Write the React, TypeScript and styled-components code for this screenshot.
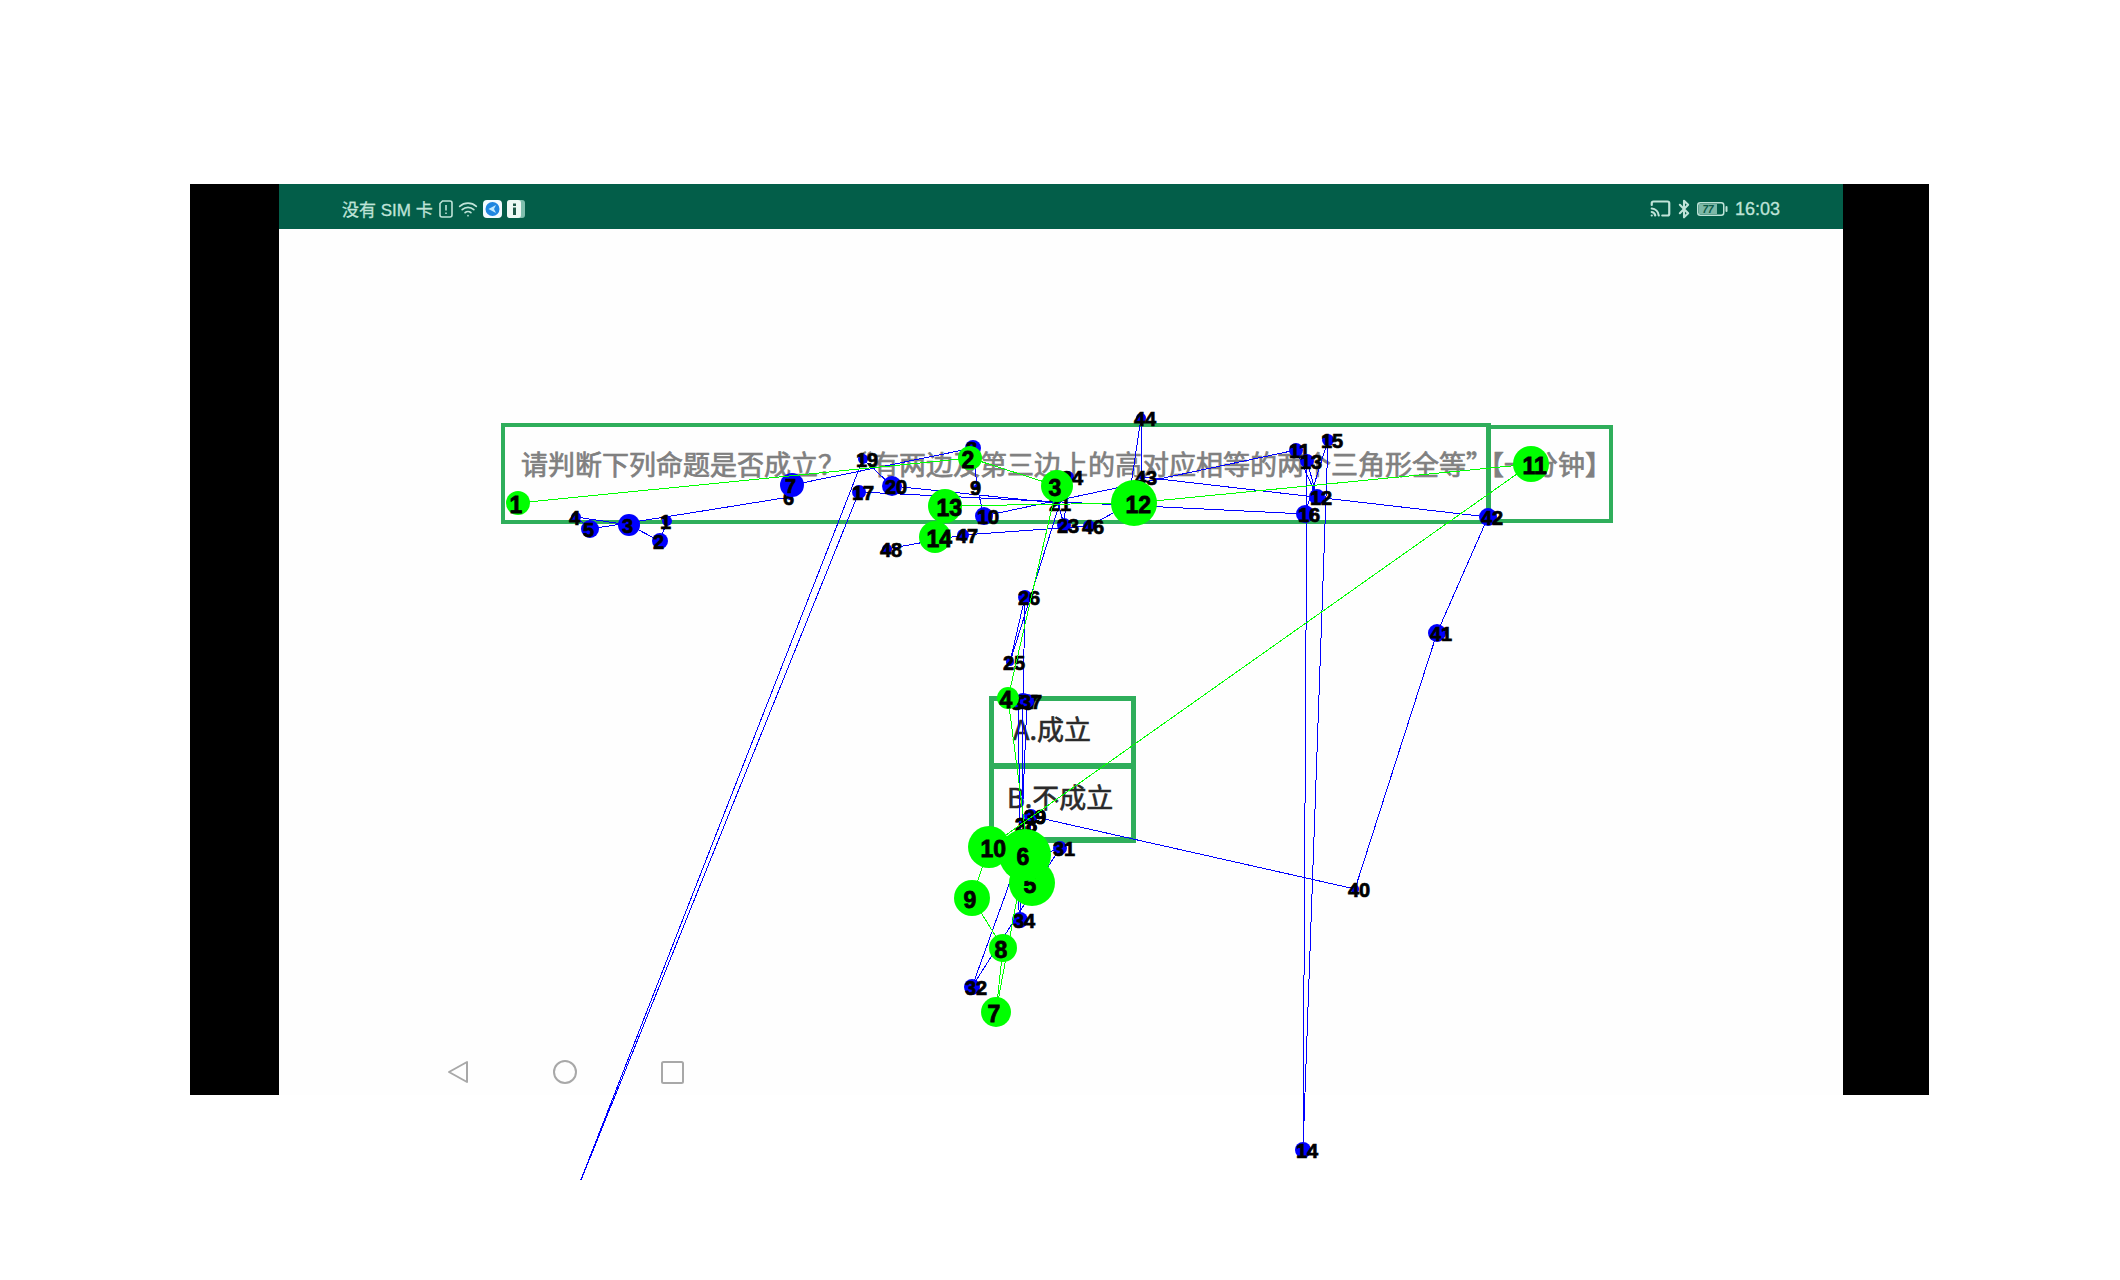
import styled, { createGlobalStyle } from "styled-components";
import { Bluetooth, Cast, Wifi } from "lucide-react";

const GlobalStyle = createGlobalStyle`
  html, body {
    margin: 0;
    background: #ffffff;
  }
`;

type Point = { n: number; x: number; y: number; r: number };

const CANVAS_HEIGHT = 1180;

// scanpath of the first recording (blue)
const bluePoints: Point[] = [
  { n: 1, x: 667, y: 521, r: 5 },
  { n: 2, x: 660, y: 541, r: 8 },
  { n: 3, x: 629, y: 525, r: 11 },
  { n: 4, x: 576, y: 517, r: 5 },
  { n: 5, x: 590, y: 529, r: 9 },
  { n: 6, x: 790, y: 497, r: 3 },
  { n: 7, x: 792, y: 485, r: 12 },
  { n: 8, x: 973, y: 448, r: 8 },
  { n: 9, x: 977, y: 487, r: 3 },
  { n: 10, x: 984, y: 516, r: 9 },
  { n: 11, x: 1296, y: 450, r: 7 },
  { n: 12, x: 1317, y: 497, r: 8 },
  { n: 13, x: 1307, y: 461, r: 7 },
  { n: 14, x: 1303, y: 1150, r: 8 },
  { n: 15, x: 1328, y: 440, r: 6 },
  { n: 16, x: 1305, y: 514, r: 9 },
  { n: 17, x: 859, y: 492, r: 7 },
  { n: 18, x: 573, y: 1200, r: 5 },
  { n: 19, x: 863, y: 459, r: 5 },
  { n: 20, x: 892, y: 486, r: 10 },
  { n: 21, x: 1056, y: 503, r: 3 },
  { n: 22, x: 1054, y: 487, r: 3 },
  { n: 23, x: 1064, y: 525, r: 7 },
  { n: 24, x: 1068, y: 477, r: 6 },
  { n: 25, x: 1010, y: 662, r: 4 },
  { n: 26, x: 1025, y: 597, r: 7 },
  { n: 27, x: 1023, y: 701, r: 8 },
  { n: 28, x: 1022, y: 824, r: 3 },
  { n: 29, x: 1031, y: 816, r: 7 },
  { n: 30, x: 1028, y: 860, r: 3 },
  { n: 31, x: 1060, y: 848, r: 7 },
  { n: 32, x: 972, y: 987, r: 8 },
  { n: 33, x: 1015, y: 868, r: 4 },
  { n: 34, x: 1020, y: 920, r: 8 },
  { n: 35, x: 1021, y: 885, r: 4 },
  { n: 36, x: 1018, y: 702, r: 6 },
  { n: 37, x: 1027, y: 701, r: 7 },
  { n: 38, x: 1022, y: 824, r: 3 },
  { n: 39, x: 1031, y: 816, r: 6 },
  { n: 40, x: 1355, y: 889, r: 4 },
  { n: 41, x: 1437, y: 633, r: 9 },
  { n: 42, x: 1488, y: 517, r: 9 },
  { n: 43, x: 1142, y: 477, r: 3 },
  { n: 44, x: 1141, y: 418, r: 5 },
  { n: 45, x: 1128, y: 505, r: 4 },
  { n: 46, x: 1089, y: 526, r: 6 },
  { n: 47, x: 963, y: 535, r: 6 },
  { n: 48, x: 887, y: 549, r: 5 },
];

// scanpath of the second recording (green)
const greenPoints: Point[] = [
  { n: 1, x: 518, y: 503, r: 12 },
  { n: 2, x: 970, y: 458, r: 12 },
  { n: 3, x: 1057, y: 486, r: 16 },
  { n: 4, x: 1008, y: 698, r: 11 },
  { n: 5, x: 1032, y: 883, r: 23 },
  { n: 6, x: 1025, y: 855, r: 26 },
  { n: 7, x: 996, y: 1012, r: 15 },
  { n: 8, x: 1003, y: 948, r: 14 },
  { n: 9, x: 972, y: 898, r: 18 },
  { n: 10, x: 989, y: 847, r: 21 },
  { n: 11, x: 1531, y: 464, r: 18 },
  { n: 12, x: 1134, y: 503, r: 23 },
  { n: 13, x: 945, y: 506, r: 17 },
  { n: 14, x: 935, y: 537, r: 16 },
];

const Page = styled.div`
  position: relative;
  height: 1280px;
  padding: 184px 191px 0 190px;
  box-sizing: border-box;
  overflow: hidden;
  font-family: "Noto Sans CJK SC", "Liberation Sans", sans-serif;
`;

const Screen = styled.div`
  height: 911px;
  padding: 0 86px 0 89px;
  background: #000000;
`;

const Panel = styled.div`
  display: flex;
  flex-direction: column;
  height: 100%;
  background: #fefefe;
`;

const StatusBar = styled.div`
  display: flex;
  align-items: center;
  justify-content: space-between;
  flex: none;
  box-sizing: border-box;
  height: 45px;
  padding: 4px 63px 0;
  background: #035e49;
  color: #bfe3d8;
  font-family: "Liberation Sans", "Noto Sans CJK SC", sans-serif;
  font-size: 17px;
  -webkit-text-stroke: 0.3px #bfe3d8;
`;

const StatusGroup = styled.div`
  display: flex;
  align-items: center;
  gap: ${(p: { $gap: number }) => p.$gap}px;
`;

const Carrier = styled.span`
  margin-right: 1px;
  white-space: nowrap;
`;

const Clock = styled.span`
  margin: 2px 0 0 4px;
  font-size: 18px;
`;

const Main = styled.div`
  flex: 1;
  display: flex;
  flex-direction: column;
  padding: 194px 0 0 222px;
`;

const QuestionRow = styled.div`
  display: flex;
  align-items: center;
`;

const QuestionBox = styled.div`
  display: flex;
  align-items: center;
  box-sizing: border-box;
  width: 990px;
  height: 101px;
  padding: 0 0 21px 16px;
  border: 4px solid #2fae5b;
  border-right-width: 5px;
  color: #808080;
  font-size: 27px;
  -webkit-text-stroke: 0.7px #808080;
  white-space: nowrap;
`;

const TimerBox = styled.div`
  display: flex;
  align-items: center;
  box-sizing: border-box;
  width: 122px;
  height: 98px;
  padding: 0 0 21px 0;
  border: 4px solid #2fae5b;
  border-left: none;
  color: #808080;
  font-size: 27px;
  -webkit-text-stroke: 0.7px #808080;
  white-space: nowrap;
`;

const TimerText = styled.span`
  margin-left: -14px;
`;

const Options = styled.div`
  display: flex;
  flex-direction: column;
  width: 147px;
  margin: 172px 0 0 488px;
`;

const Option = styled.div<{ $last?: boolean }>`
  display: flex;
  align-items: center;
  box-sizing: border-box;
  height: ${(p) => (p.$last ? "74px" : "73px")};
  padding: 0 0 ${(p) => (p.$last ? "14px" : "8px")} ${(p) => (p.$last ? "13px" : "19px")};
  border: 5px solid #2fae5b;
  border-top-width: ${(p) => (p.$last ? "0" : "5px")};
  border-bottom-width: 6px;
  color: #2a2a2a;
  font-size: 27px;
  -webkit-text-stroke: 0.6px #2a2a2a;
`;

const NavBar = styled.div`
  display: flex;
  align-items: center;
  flex: none;
  gap: 84px;
  height: 46px;
  padding: 0 0 0 168px;
`;

const Overlay = styled.svg`
  position: absolute;
  top: 0;
  left: 0;
  pointer-events: none;
`;

const PointLabel = styled.text<{ $weight: number }>`
  font-family: "Liberation Sans", sans-serif;
  font-weight: 700;
  fill: #000000;
  stroke: #000000;
  stroke-width: ${(p) => p.$weight}px;
`;

function SimIcon() {
  return (
    <svg width="14" height="18" viewBox="0 0 14 18" fill="none" stroke="#bfe3d8" strokeWidth="1.6">
      <path d="M1 3.5 3.5 1H11a2 2 0 0 1 2 2v12a2 2 0 0 1-2 2H3a2 2 0 0 1-2-2Z" />
      <path d="M7 5v5.5M7 12.5v1.5" />
    </svg>
  );
}

function BlueAppIcon() {
  return (
    <svg width="19" height="18" viewBox="0 0 19 18">
      <rect width="19" height="18" rx="4" fill="#f2fbff" />
      <circle cx="9.5" cy="9" r="7" fill="#1f86e0" />
      <path d="M13 5 5.5 9l7.5 4-2-4Z" fill="#bfe9ff" />
    </svg>
  );
}

function InfoAppIcon() {
  return (
    <svg width="18" height="18" viewBox="0 0 18 18">
      <rect width="18" height="18" rx="3" fill="#7fbfae" />
      <rect width="14" height="18" rx="3" fill="#eefaf6" />
      <path d="M6 3.5h3V6H6ZM6 7.5h3V15H6Z" fill="#1f5a4a" />
    </svg>
  );
}

function BatteryIcon() {
  return (
    <svg width="31" height="14" viewBox="0 0 31 14">
      <rect x="0.75" y="0.75" width="26" height="12.5" rx="2.5" fill="none" stroke="#bfe3d8" strokeWidth="1.5" />
      <rect x="2" y="2" width="18" height="10" fill="#7db8a7" />
      <rect x="28.5" y="4" width="2" height="6" rx="1" fill="#bfe3d8" />
      <text x="11" y="11" textAnchor="middle" fontSize="10" fontWeight="700" fontStyle="italic" fill="#0b5a47" stroke="none">
        77
      </text>
    </svg>
  );
}

function NavIcons() {
  return (
    <>
      <svg width="22" height="24" viewBox="0 0 22 24" fill="none" stroke="#a8a8a8" strokeWidth="2" strokeLinejoin="round">
        <path d="M20 2v20L2 12Z" />
      </svg>
      <svg width="24" height="24" viewBox="0 0 24 24" fill="none" stroke="#a8a8a8" strokeWidth="2">
        <circle cx="12" cy="12" r="11" />
      </svg>
      <svg width="23" height="23" viewBox="0 0 23 23" fill="none" stroke="#a8a8a8" strokeWidth="2" strokeLinejoin="round">
        <rect x="1" y="1" width="21" height="21" rx="1.5" />
      </svg>
    </>
  );
}

type ScanpathProps = {
  points: Point[];
  color: string;
  fontSize: number;
  weight: number;
  dx: number;
  dy: number;
};

function Scanpath({ points, color, fontSize, weight, dx, dy }: ScanpathProps) {
  // each fixation is painted in turn, so a later circle covers an earlier label
  return (
    <g>
      <polyline
        points={points.map((p) => `${p.x},${p.y}`).join(" ")}
        fill="none"
        stroke={color}
        strokeWidth="1"
        shapeRendering="crispEdges"
      />
      {points
        .filter((p) => p.y < CANVAS_HEIGHT)
        .map((p) => (
          <g key={p.n}>
            <circle cx={p.x} cy={p.y} r={p.r} fill={color} />
            <PointLabel x={p.x - dx} y={p.y + dy} fontSize={fontSize} $weight={weight}>
              {p.n}
            </PointLabel>
          </g>
        ))}
    </g>
  );
}

export default function App() {
  return (
    <Page>
      <GlobalStyle />
      <Screen>
        <Panel>
          <StatusBar>
            <StatusGroup $gap={5}>
              <Carrier>没有 SIM 卡</Carrier>
              <SimIcon />
              <Wifi size={20} color="#bfe3d8" strokeWidth={2} />
              <BlueAppIcon />
              <InfoAppIcon />
            </StatusGroup>
            <StatusGroup $gap={3}>
              <Cast size={21} color="#bfe3d8" strokeWidth={2.5} />
              <Bluetooth size={20} color="#bfe3d8" strokeWidth={2.5} />
              <BatteryIcon />
              <Clock>16:03</Clock>
            </StatusGroup>
          </StatusBar>
          <Main>
            <QuestionRow>
              <QuestionBox>请判断下列命题是否成立？“有两边及第三边上的高对应相等的两个三角形全等”</QuestionBox>
              <TimerBox>
                <TimerText>【一分钟】</TimerText>
              </TimerBox>
            </QuestionRow>
            <Options>
              <Option>A.成立</Option>
              <Option $last>B.不成立</Option>
            </Options>
          </Main>
          <NavBar>
            <NavIcons />
          </NavBar>
        </Panel>
      </Screen>
      <Overlay width="2120" height={CANVAS_HEIGHT} viewBox={`0 0 2120 ${CANVAS_HEIGHT}`}>
        <Scanpath points={bluePoints} color="#0000ff" fontSize={20} weight={0.7} dx={7} dy={8} />
        <Scanpath points={greenPoints} color="#00ff00" fontSize={23} weight={0.8} dx={8.5} dy={9.5} />
      </Overlay>
    </Page>
  );
}
